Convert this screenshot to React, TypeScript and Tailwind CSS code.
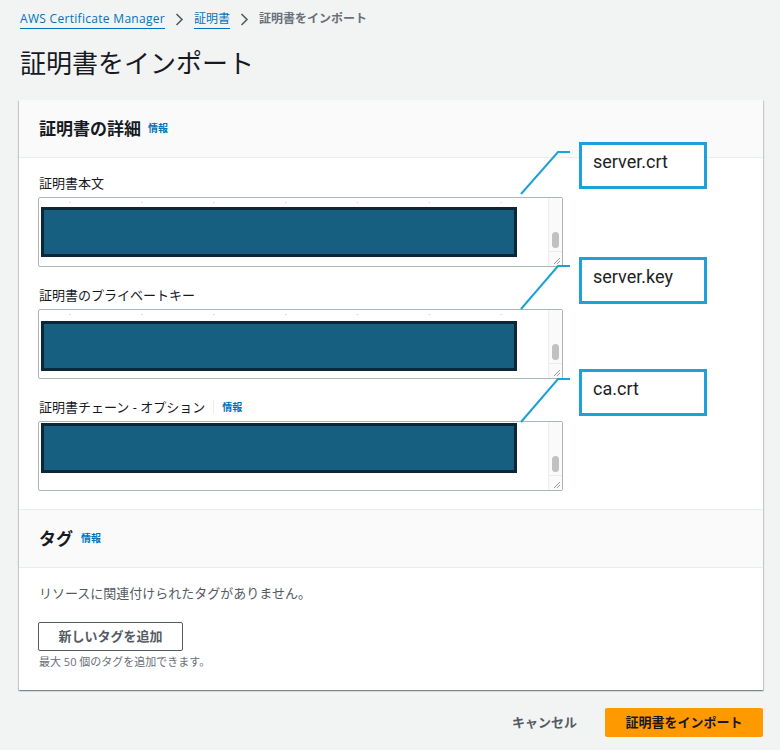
import React from "react";

const jp = { fontFamily: '"Open Sans", "Noto Sans CJK JP", sans-serif' };

function Info({ ml }: { ml: number }) {
  return (
    <span className="text-[10px] font-bold text-[#0073bb]" style={{ marginLeft: ml }}>
      情報
    </span>
  );
}

function FakeTextarea({ rectTop, rectH }: { rectTop: number; rectH: number }) {
  return (
    <div className="relative w-[525px] h-[70px] border border-[#aab7b8] rounded-[2px] bg-white overflow-hidden">
      <div className="absolute left-[30px] right-[60px] top-[1px] flex justify-between text-[6px] text-[#333] leading-none">
        <span>·</span><span>·</span><span>·</span><span>·</span><span>·</span><span>·</span><span>·</span>
      </div>
      <div
        className="absolute left-[2px] w-[476px] bg-[#175f80] border-[3px] border-[#0b2838]"
        style={{ top: rectTop, height: rectH }}
      />
      <div className="absolute right-0 top-0 bottom-0 w-[14px] bg-[#fafafa] border-l border-[#ececec] flex flex-col">
        <div className="flex-1 relative">
          <div className="absolute left-[3px] bottom-[3px] w-[7px] h-[16px] rounded-full bg-[#c1c1c1]" />
        </div>
        <div className="h-[15px] border-t border-[#ececec] relative">
          <svg className="absolute right-[1px] bottom-[1px]" width="8" height="8" viewBox="0 0 8 8">
            <path d="M7 1 L1 7 M7 4 L4 7" stroke="#999" strokeWidth="1" />
          </svg>
        </div>
      </div>
    </div>
  );
}

function Callout({ top, label }: { top: number; label: string }) {
  return (
    <div
      className="absolute left-[579px] w-[128px] h-[47px] border-[3px] border-[#1da1d9] bg-white pl-[11px] pt-[5px] text-[18px] leading-[24px] text-[#222]"
      style={{ top, fontFamily: "Roboto, sans-serif" }}
    >
      {label}
    </div>
  );
}

export default function App() {
  return (
    <div className="relative w-[780px] h-[750px] bg-[#f2f3f3] overflow-hidden" style={jp}>
      {/* breadcrumb */}
      <div className="h-[40px] pl-[20px] pt-[10px] flex items-start text-[12px] leading-[18px]">
        <span className="text-[#0073bb] border-b border-[#0073bb] tracking-[0.3px]">AWS Certificate Manager</span>
        <svg className="mx-[10px] mt-[3px]" width="9" height="13" viewBox="0 0 9 13">
          <path d="M1.5 1 L7 6.5 L1.5 12" stroke="#545b64" strokeWidth="1.6" fill="none" />
        </svg>
        <span className="text-[#0073bb] border-b border-[#0073bb]">証明書</span>
        <svg className="mx-[10px] mt-[3px]" width="9" height="13" viewBox="0 0 9 13">
          <path d="M1.5 1 L7 6.5 L1.5 12" stroke="#545b64" strokeWidth="1.6" fill="none" />
        </svg>
        <span className="text-[#687078] font-bold">証明書をインポート</span>
      </div>
      <h1 className="pl-[20px] h-[60px] pt-[5px] text-[26px] leading-[36px] text-[#16191f] font-normal">
        証明書をインポート
      </h1>

      {/* card */}
      <div className="ml-[19px] w-[744px] bg-white shadow-[0_1px_1px_0_rgba(0,28,36,0.3),1px_1px_1px_0_rgba(0,28,36,0.15),-1px_1px_1px_0_rgba(0,28,36,0.15)]">
        <div className="h-[58px] bg-[#fafafa] border-b border-[#eaeded] px-[20px] flex items-center">
          <span className="text-[17px] font-bold text-[#16191f]">証明書の詳細</span>
          <Info ml={7} />
        </div>
        <div className="px-[19px] pt-[16px] pb-[18px]">
          <div className="pl-[1px] text-[13px] leading-[18px] text-[#16191f] mb-[5px]">証明書本文</div>
          <FakeTextarea rectTop={9} rectH={50} />
          <div className="pl-[1px] mt-[19px] text-[13px] leading-[18px] text-[#16191f] mb-[5px]">証明書のプライベートキー</div>
          <FakeTextarea rectTop={11} rectH={50} />
          <div className="pl-[1px] mt-[19px] text-[13px] leading-[18px] text-[#16191f] mb-[5px] flex items-center">
            <span>証明書チェーン - オプション</span>
            <span className="ml-[8px] w-px h-[14px] bg-[#eaeded]" />
            <span className="text-[10px] font-bold text-[#0073bb] ml-[8px]">情報</span>
          </div>
          <FakeTextarea rectTop={1} rectH={50} />
        </div>
        <div className="h-[59px] bg-[#fafafa] border-t border-b border-[#eaeded] px-[20px] flex items-center">
          <span className="text-[17px] font-bold text-[#16191f]">タグ</span>
          <Info ml={8} />
        </div>
        <div className="px-[19px] pt-[16px] pb-[20px]">
          <div className="pl-[1px] text-[13px] leading-[18px] text-[#545b64]">リソースに関連付けられたタグがありません。</div>
          <button className="mt-[20px] w-[145px] h-[29px] border border-[#545b64] rounded-[2px] bg-white text-[13px] font-bold text-[#545b64]">
            新しいタグを追加
          </button>
          <div className="pl-[1px] mt-[3px] text-[11px] leading-[16px] text-[#687078]">最大 50 個のタグを追加できます。</div>
        </div>
      </div>

      {/* footer */}
      <div className="mt-[18px] pr-[17px] flex justify-end items-center">
        <span className="text-[13px] font-bold text-[#545b64] mr-[28px]">キャンセル</span>
        <button className="w-[158px] h-[29px] bg-[#ff9900] rounded-[2px] text-[13px] font-bold text-[#16191f]">
          証明書をインポート
        </button>
      </div>

      {/* annotations */}
      <svg className="absolute left-0 top-0 pointer-events-none" width="780" height="750">
        <path d="M570 152 L558 152 L521 194" stroke="#1da1d9" strokeWidth="2" fill="none" />
        <path d="M570 266 L558 266 L521 309" stroke="#1da1d9" strokeWidth="2" fill="none" />
        <path d="M570 379 L558 379 L521 422" stroke="#1da1d9" strokeWidth="2" fill="none" />
      </svg>
      <Callout top={142} label="server.crt" />
      <Callout top={257} label="server.key" />
      <Callout top={369} label="ca.crt" />
    </div>
  );
}
